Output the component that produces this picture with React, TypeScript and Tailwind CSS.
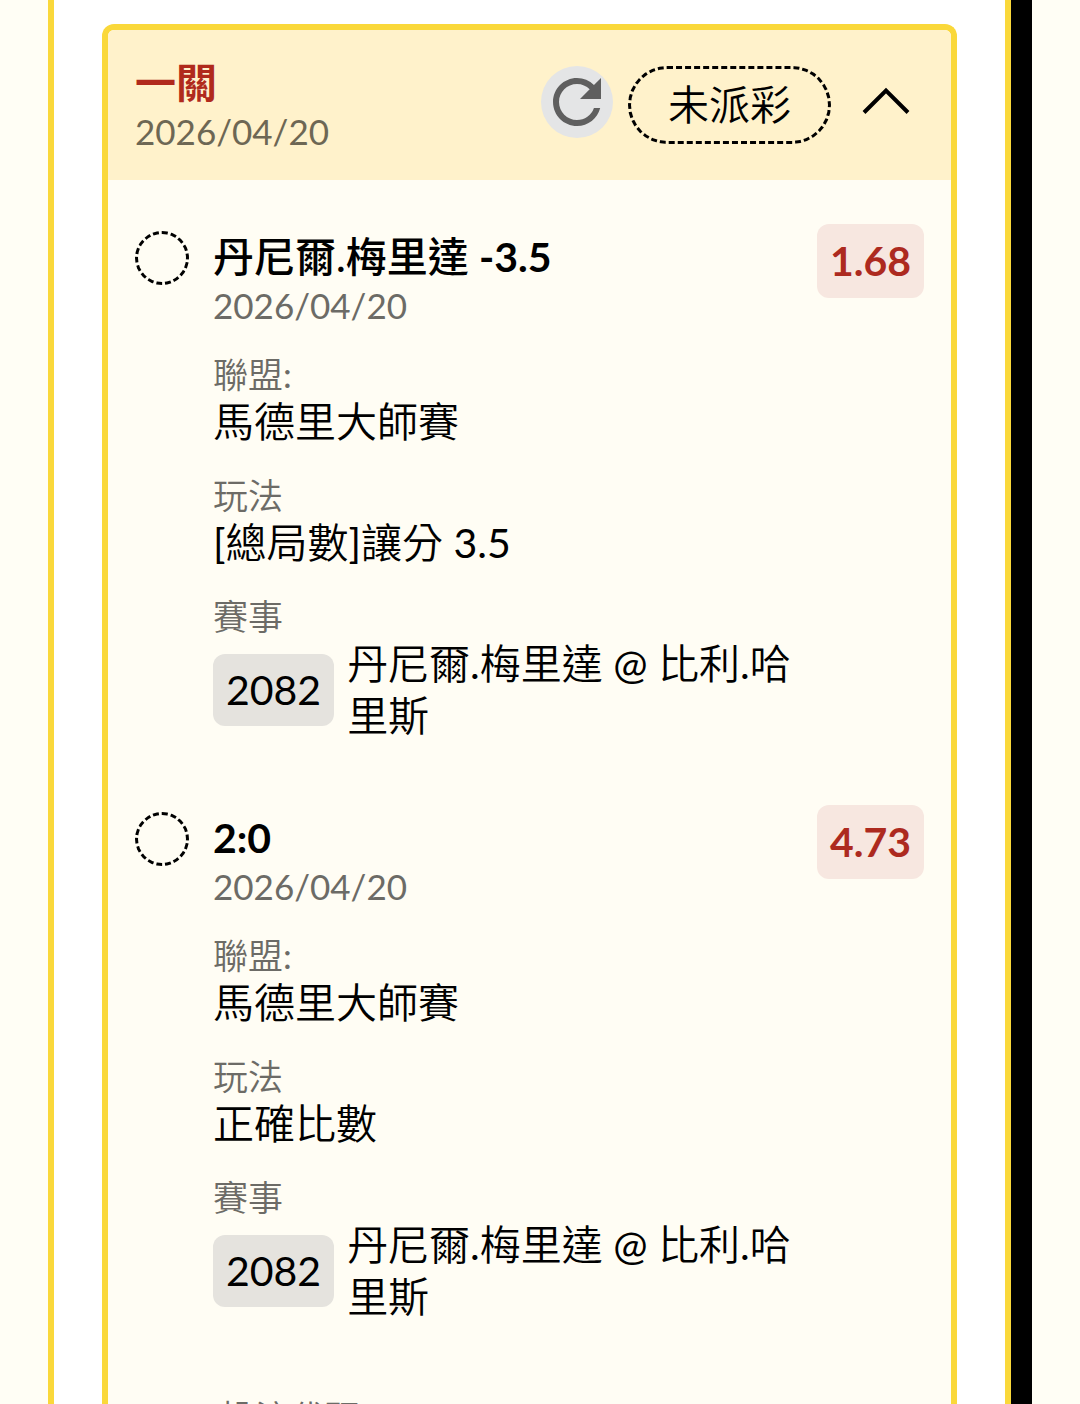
import { useState } from "react";
import { MdRefresh } from "react-icons/md";

type Leg = {
  player?: string;
  line: string;
  odds: string;
  date: string;
  league: string;
  market: string;
  code: string;
  match: string;
};

const legs: Leg[] = [
  {
    player: "丹尼爾.梅里達",
    line: "-3.5",
    odds: "1.68",
    date: "2026/04/20",
    league: "馬德里大師賽",
    market: "[總局數]讓分 3.5",
    code: "2082",
    match: "丹尼爾.梅里達 @ 比利.哈里斯",
  },
  {
    line: "2:0",
    odds: "4.73",
    date: "2026/04/20",
    league: "馬德里大師賽",
    market: "正確比數",
    code: "2082",
    match: "丹尼爾.梅里達 @ 比利.哈里斯",
  },
];

function Label({ children }: { children: string }) {
  return <dt className="text-[35px] leading-[44px] text-[#6c6b66]">{children}</dt>;
}

function LegRow({ leg }: { leg: Leg }) {
  return (
    <li className="flex items-start gap-6">
      <span className="size-[54px] shrink-0 rounded-full border-3 border-dashed border-black" />
      <div className="min-w-0 flex-1">
        <h3 className="font-[Lato,'Noto_Sans_CJK_TC',sans-serif] font-medium">
          {leg.player && `${leg.player} `}
          <span className="font-bold">{leg.line}</span>
        </h3>
        <p className="text-[35px] leading-[44px] text-[#6c6b66]">{leg.date}</p>
        <dl className="mt-[25px] flex flex-col gap-[25px]">
          <div>
            <Label>聯盟:</Label>
            <dd>{leg.league}</dd>
          </div>
          <div>
            <Label>玩法</Label>
            <dd>{leg.market}</dd>
          </div>
          <div>
            <Label>賽事</Label>
            <dd className="flex items-center gap-[13px]">
              <span className="rounded-xl bg-[#e5e3de] px-[13px] py-[10px]">{leg.code}</span>
              <span>{leg.match}</span>
            </dd>
          </div>
        </dl>
      </div>
      <span className="-mt-[7px] shrink-0 rounded-xl bg-[#f7e7e0] px-[13px] py-[11px] font-bold text-[#ad2a1f]">
        {leg.odds}
      </span>
    </li>
  );
}

export default function App() {
  const [open, setOpen] = useState(true);

  return (
    <div
      lang="zh-Hant"
      className="h-screen overflow-hidden bg-[#fffef5] px-12 font-[Lato,'Noto_Sans_CJK_TC_DemiLight','Noto_Sans_CJK_TC',sans-serif] text-[41px] leading-[52px] text-black"
    >
      <div className="flex h-full bg-black pr-[21px]">
        <main className="min-w-0 flex-1 border-x-6 border-[#fad83a] bg-white px-12 pt-6">
          <section className="h-full rounded-t-xl border-6 border-b-0 border-[#fad83a] bg-[#fffdf4]">
            <header className="flex items-start justify-between rounded-t-md bg-[#fff2cb] p-[27px]">
              <div>
                <h2 className="font-[Lato,'Noto_Sans_CJK_TC',sans-serif] font-bold text-[#b02a1c]">一關</h2>
                <p className="text-[35px] leading-[44px] text-[#6d6754]">2026/04/20</p>
              </div>
              <div className="flex items-start pt-[9px]">
                <button
                  type="button"
                  aria-label="重新整理"
                  className="size-[72px] rounded-full bg-[#e4e5e6] text-[#5f5f5f]"
                >
                  <MdRefresh className="size-[72px]" />
                </button>
                <span className="ml-[15px] rounded-full border-3 border-dashed border-black px-[37px] py-[10px]">
                  未派彩
                </span>
                <button
                  type="button"
                  aria-label="收合"
                  aria-expanded={open}
                  onClick={() => setOpen(!open)}
                  className="ml-4 flex h-[70px] w-[77px] items-center justify-center"
                >
                  <svg viewBox="0 0 48 28" className={open ? "w-12" : "w-12 rotate-180"} fill="none">
                    <path d="M2 25.5 24 3.5l22 22" stroke="#000" strokeWidth="4" />
                  </svg>
                </button>
              </div>
            </header>
            {open && (
              <div className="px-[27px] pt-[51px]">
                <ul className="flex flex-col gap-[70px]">
                  {legs.map((leg) => (
                    <LegRow key={leg.line} leg={leg} />
                  ))}
                </ul>
                <dl className="mt-[72px] pl-[85px]">
                  <Label>投注代碼</Label>
                </dl>
              </div>
            )}
          </section>
        </main>
      </div>
    </div>
  );
}
